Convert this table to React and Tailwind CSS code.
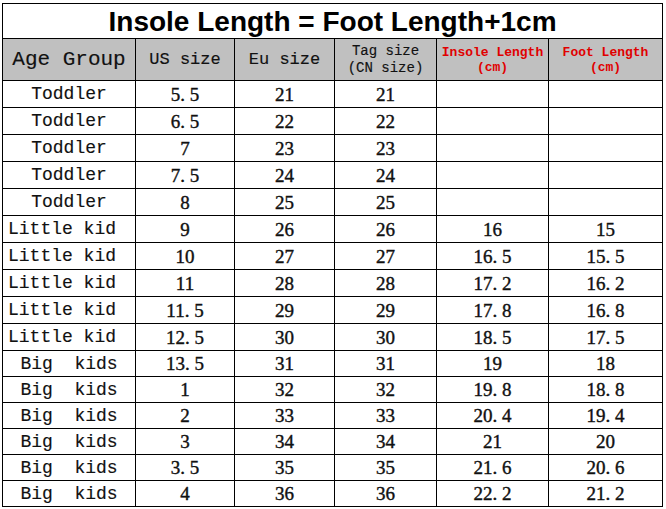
const rows = [
  ["Toddler", "5.5", "21", "21", "", "", "c"],
  ["Toddler", "6.5", "22", "22", "", "", "c"],
  ["Toddler", "7", "23", "23", "", "", "c"],
  ["Toddler", "7.5", "24", "24", "", "", "c"],
  ["Toddler", "8", "25", "25", "", "", "c"],
  ["Little kid", "9", "26", "26", "16", "15", "l"],
  ["Little kid", "10", "27", "27", "16.5", "15.5", "l"],
  ["Little kid", "11", "28", "28", "17.2", "16.2", "l"],
  ["Little kid", "11.5", "29", "29", "17.8", "16.8", "l"],
  ["Little kid", "12.5", "30", "30", "18.5", "17.5", "l"],
  ["Big  kids", "13.5", "31", "31", "19", "18", "c"],
  ["Big  kids", "1", "32", "32", "19.8", "18.8", "c"],
  ["Big  kids", "2", "33", "33", "20.4", "19.4", "c"],
  ["Big  kids", "3", "34", "34", "21", "20", "c"],
  ["Big  kids", "3.5", "35", "35", "21.6", "20.6", "c"],
  ["Big  kids", "4", "36", "36", "22.2", "21.2", "c"],
];

const cell = "border border-black p-0 text-center";
const heavy = "[-webkit-text-stroke:0.4px_#111]";
const light = "[-webkit-text-stroke:0.15px_#111]";
const mono = { fontFamily: '"Liberation Mono", monospace' };
const serif = { fontFamily: '"Liberation Serif", "Times New Roman", serif' };

export default function App() {
  return (
    <div className="w-[666px] h-[509px] bg-white overflow-hidden pt-[3px] pl-[2px]">
      <table className="border-collapse table-fixed w-[660px] text-[#111]" style={mono}>
        <colgroup>
          <col className="w-[133px]" />
          <col className="w-[99px]" />
          <col className="w-[100px]" />
          <col className="w-[102px]" />
          <col className="w-[112px]" />
          <col className="w-[114px]" />
        </colgroup>
        <tbody>
          <tr className="h-[35px]">
            <td
              colSpan={6}
              className={`${cell} text-[28px] font-bold leading-none text-black pt-[2px]`}
              style={{ fontFamily: '"Liberation Sans", Arial, sans-serif' }}
            >
              Insole Length = Foot Length+1cm
            </td>
          </tr>
          <tr className="h-[42px] bg-[#c0c0c0]">
            <td className={`${cell} ${light} text-[21px] leading-none`}>Age Group</td>
            <td className={`${cell} ${light} text-[17px] leading-none`}>US size</td>
            <td className={`${cell} ${light} text-[17px] leading-none`}>Eu size</td>
            <td className={`${cell} ${light} text-[14px] leading-[17px]`}>
              Tag size
              <br />
              (CN size)
            </td>
            <td className={`${cell} text-[13px] leading-[15px] font-bold text-[#e00000]`}>
              Insole Length
              <br />
              (cm)
            </td>
            <td className={`${cell} text-[13px] leading-[15px] font-bold text-[#e00000]`}>
              Foot Length
              <br />
              (cm)
            </td>
          </tr>
          {rows.map((r, i) => (
            <tr key={i} className={i < 10 ? "h-[27px]" : "h-[26px]"}>
              <td
                className={`border border-black p-0 text-[18px] leading-none whitespace-pre ${light} ${
                  r[6] === "l" ? "text-left pl-[5px]" : "text-center"
                }`}
              >
                {r[0]}
              </td>
              {r.slice(1, 6).map((v, j) => (
                <td
                  key={j}
                  className={`${cell} ${heavy} text-[19px] leading-none whitespace-pre`}
                  style={serif}
                >
                  {v.replace(".", ". ")}
                </td>
              ))}
            </tr>
          ))}
        </tbody>
      </table>
    </div>
  );
}
